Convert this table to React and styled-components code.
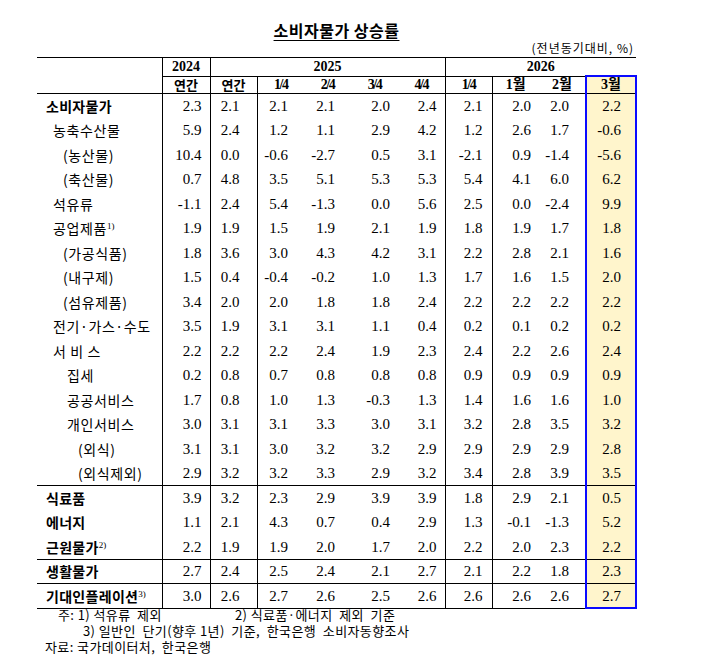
import React from "react";
import styled, { createGlobalStyle } from "styled-components";

const KR = `"Noto Sans CJK KR", "Noto Sans", sans-serif`;
const NUM = `"Liberation Serif", "Noto Sans CJK KR", serif`;
const BLUE = "#0a0aff";

const GlobalStyle = createGlobalStyle`
  html, body { margin: 0; padding: 0; background: #fff; }
  body { font-family: ${NUM}; color: #000; }
`;

const Page = styled.div`
  width: 599px;
  padding: 20px 0 0 37px;
`;

const Title = styled.h1`
  margin: 0;
  font-family: ${KR};
  font-size: 16px;
  font-weight: 700;
  line-height: 20px;
  letter-spacing: 0.5px;
  text-align: center;

  span {
    text-decoration: underline;
    text-decoration-thickness: 1px;
    text-underline-offset: 3px;
  }
`;

const Unit = styled.div`
  font-family: ${KR};
  font-size: 12px;
  line-height: 16px;
  letter-spacing: 1px;
  text-align: right;
  padding: 0 2px 1px 0;
`;

const Table = styled.table`
  border-collapse: collapse;
  table-layout: fixed;
  width: 599px;
  border-top: 1px solid #000;
  border-bottom: 1px solid #000;
`;

const HeadRow = styled.tr`
  height: ${(p) => p.$h}px;
  line-height: ${(p) => p.$h}px;
`;

const HeadCell = styled.th`
  padding: 0;
  font-family: ${(p) => (p.$kr ? KR : NUM)};
  font-size: ${(p) => (p.$kr ? "13px" : "14px")};
  font-weight: 700;
  letter-spacing: ${(p) => (p.$tight ? "-1.5px" : "0")};
  text-align: center;
  vertical-align: middle;
  border-right: ${(p) => (p.$rule ? "1px solid #000" : "none")};
  border-bottom: ${(p) => (p.$under ? "1px solid #000" : "none")};
  background: ${(p) => (p.$hl ? "#fff5cc" : "transparent")};
  ${(p) =>
    p.$hl &&
    `border-left: 2px solid ${BLUE}; border-right: 2px solid ${BLUE}; border-top: 2px solid ${BLUE};`}
`;

const Row = styled.tr`
  height: 24.5px;
  line-height: 20px;
  border-bottom: ${(p) => (p.$sep ? "1px solid #000" : "none")};
`;

const Label = styled.td`
  padding: 0 0 0 ${(p) => p.$indent}px;
  font-family: ${KR};
  font-size: 14px;
  font-weight: ${(p) => (p.$bold ? 700 : 400)};
  letter-spacing: ${(p) => (p.$bold ? "0.3px" : "0.6px")};
  white-space: nowrap;
  vertical-align: middle;
  border-right: 1px solid #000;
`;

const Sup = styled.sup`
  font-family: ${NUM};
  font-size: 9px;
  font-weight: 400;
  line-height: 0;
  vertical-align: 5px;
  letter-spacing: 0;
`;

const Value = styled.td`
  padding: 0 ${(p) => p.$pr}px 0 0;
  font-family: ${NUM};
  font-size: 15px;
  text-align: right;
  vertical-align: middle;
  white-space: nowrap;
  border-right: ${(p) => (p.$rule ? "1px solid #000" : "none")};
  background: ${(p) => (p.$hl ? "#fff5cc" : "transparent")};
  ${(p) => p.$hl && `border-left: 2px solid ${BLUE}; border-right: 2px solid ${BLUE};`}
  ${(p) => p.$hl && p.$last && `border-bottom: 2px solid ${BLUE};`}
`;

const Notes = styled.div`
  margin-top: -2px;
  font-family: ${KR};
  font-size: 13px;
  line-height: 16px;
  letter-spacing: 0.4px;
`;

const NoteLine = styled.div`
  display: flex;
  padding-left: ${(p) => p.$indent}px;
  white-space: pre;
`;

const NoteItem = styled.span`
  width: ${(p) => (p.$w ? `${p.$w}px` : "auto")};
`;

const widths = [125, 48, 47, 47, 47, 47, 47, 47, 47, 47, 50];

const cols = [
  { pr: 8, rule: true },
  { pr: 17, rule: true },
  { pr: 16 },
  { pr: 16 },
  { pr: 8 },
  { pr: 8, rule: true },
  { pr: 9, rule: true },
  { pr: 8 },
  { pr: 16 },
  { pr: 14, hl: true },
];

const indents = [9, 16, 26, 30, 41];

const rows = [
  { label: "소비자물가", level: 0, bold: true, v: ["2.3", "2.1", "2.1", "2.1", "2.0", "2.4", "2.1", "2.0", "2.0", "2.2"] },
  { label: "농축수산물", level: 1, v: ["5.9", "2.4", "1.2", "1.1", "2.9", "4.2", "1.2", "2.6", "1.7", "-0.6"] },
  { label: "(농산물)", level: 2, v: ["10.4", "0.0", "-0.6", "-2.7", "0.5", "3.1", "-2.1", "0.9", "-1.4", "-5.6"] },
  { label: "(축산물)", level: 2, v: ["0.7", "4.8", "3.5", "5.1", "5.3", "5.3", "5.4", "4.1", "6.0", "6.2"] },
  { label: "석유류", level: 1, v: ["-1.1", "2.4", "5.4", "-1.3", "0.0", "5.6", "2.5", "0.0", "-2.4", "9.9"] },
  { label: "공업제품", sup: "1)", level: 1, v: ["1.9", "1.9", "1.5", "1.9", "2.1", "1.9", "1.8", "1.9", "1.7", "1.8"] },
  { label: "(가공식품)", level: 2, v: ["1.8", "3.6", "3.0", "4.3", "4.2", "3.1", "2.2", "2.8", "2.1", "1.6"] },
  { label: "(내구제)", level: 2, v: ["1.5", "0.4", "-0.4", "-0.2", "1.0", "1.3", "1.7", "1.6", "1.5", "2.0"] },
  { label: "(섬유제품)", level: 2, v: ["3.4", "2.0", "2.0", "1.8", "1.8", "2.4", "2.2", "2.2", "2.2", "2.2"] },
  { label: "전기·가스·수도", level: 1, v: ["3.5", "1.9", "3.1", "3.1", "1.1", "0.4", "0.2", "0.1", "0.2", "0.2"] },
  { label: "서 비 스", level: 1, v: ["2.2", "2.2", "2.2", "2.4", "1.9", "2.3", "2.4", "2.2", "2.6", "2.4"] },
  { label: "집세", level: 3, v: ["0.2", "0.8", "0.7", "0.8", "0.8", "0.8", "0.9", "0.9", "0.9", "0.9"] },
  { label: "공공서비스", level: 3, v: ["1.7", "0.8", "1.0", "1.3", "-0.3", "1.3", "1.4", "1.6", "1.6", "1.0"] },
  { label: "개인서비스", level: 3, v: ["3.0", "3.1", "3.1", "3.3", "3.0", "3.1", "3.2", "2.8", "3.5", "3.2"] },
  { label: "(외식)", level: 4, v: ["3.1", "3.1", "3.0", "3.2", "3.2", "2.9", "2.9", "2.9", "2.9", "2.8"] },
  { label: "(외식제외)", level: 4, sep: true, v: ["2.9", "3.2", "3.2", "3.3", "2.9", "3.2", "3.4", "2.8", "3.9", "3.5"] },
  { label: "식료품", level: 0, bold: true, v: ["3.9", "3.2", "2.3", "2.9", "3.9", "3.9", "1.8", "2.9", "2.1", "0.5"] },
  { label: "에너지", level: 0, bold: true, v: ["1.1", "2.1", "4.3", "0.7", "0.4", "2.9", "1.3", "-0.1", "-1.3", "5.2"] },
  { label: "근원물가", sup: "2)", level: 0, bold: true, sep: true, v: ["2.2", "1.9", "1.9", "2.0", "1.7", "2.0", "2.2", "2.0", "2.3", "2.2"] },
  { label: "생활물가", level: 0, bold: true, sep: true, v: ["2.7", "2.4", "2.5", "2.4", "2.1", "2.7", "2.1", "2.2", "1.8", "2.3"] },
  { label: "기대인플레이션", sup: "3)", level: 0, bold: true, v: ["3.0", "2.6", "2.7", "2.6", "2.5", "2.6", "2.6", "2.6", "2.6", "2.7"] },
];

const subHeads = [
  { text: "연간", kr: true, rule: true },
  { text: "연간", kr: true, rule: true },
  { text: "1/4", tight: true },
  { text: "2/4", tight: true },
  { text: "3/4", tight: true },
  { text: "4/4", tight: true, rule: true },
  { text: "1/4", tight: true, rule: true },
  { text: "1월" },
  { text: "2월" },
  { text: "3월", hl: true },
];

export default function App() {
  return (
    <Page>
      <GlobalStyle />
      <Title>
        <span>소비자물가 상승률</span>
      </Title>
      <Unit>(전년동기대비, %)</Unit>
      <Table>
        <colgroup>
          {widths.map((w, i) => (
            <col key={i} style={{ width: w }} />
          ))}
        </colgroup>
        <thead>
          <HeadRow $h={17}>
            <HeadCell rowSpan={2} $rule style={{ borderBottom: "1px solid #000" }} />
            <HeadCell $rule $under>2024</HeadCell>
            <HeadCell colSpan={5} $rule $under>2025</HeadCell>
            <HeadCell colSpan={4} $under>2026</HeadCell>
          </HeadRow>
          <HeadRow $h={16} style={{ borderBottom: "1px solid #000" }}>
            {subHeads.map((h, i) => (
              <HeadCell key={i} $kr={h.kr} $tight={h.tight} $rule={h.rule} $hl={h.hl}>
                {h.text}
              </HeadCell>
            ))}
          </HeadRow>
        </thead>
        <tbody>
          {rows.map((r, ri) => (
            <Row key={ri} $sep={r.sep}>
              <Label $indent={indents[r.level]} $bold={r.bold}>
                {r.label}
                {r.sup && <Sup>{r.sup}</Sup>}
              </Label>
              {r.v.map((val, ci) => (
                <Value
                  key={ci}
                  $pr={cols[ci].pr}
                  $rule={cols[ci].rule}
                  $hl={cols[ci].hl}
                  $last={ri === rows.length - 1}
                >
                  {val}
                </Value>
              ))}
            </Row>
          ))}
        </tbody>
      </Table>
      <Notes>
        <NoteLine $indent={21}>
          <NoteItem $w={177}>주: 1) 석유류  제외</NoteItem>
          <NoteItem>2) 식료품·에너지  제외  기준</NoteItem>
        </NoteLine>
        <NoteLine $indent={46}>3) 일반인  단기(향후 1년)  기준,  한국은행  소비자동향조사</NoteLine>
        <NoteLine $indent={8}>자료: 국가데이터처,  한국은행</NoteLine>
      </Notes>
    </Page>
  );
}
